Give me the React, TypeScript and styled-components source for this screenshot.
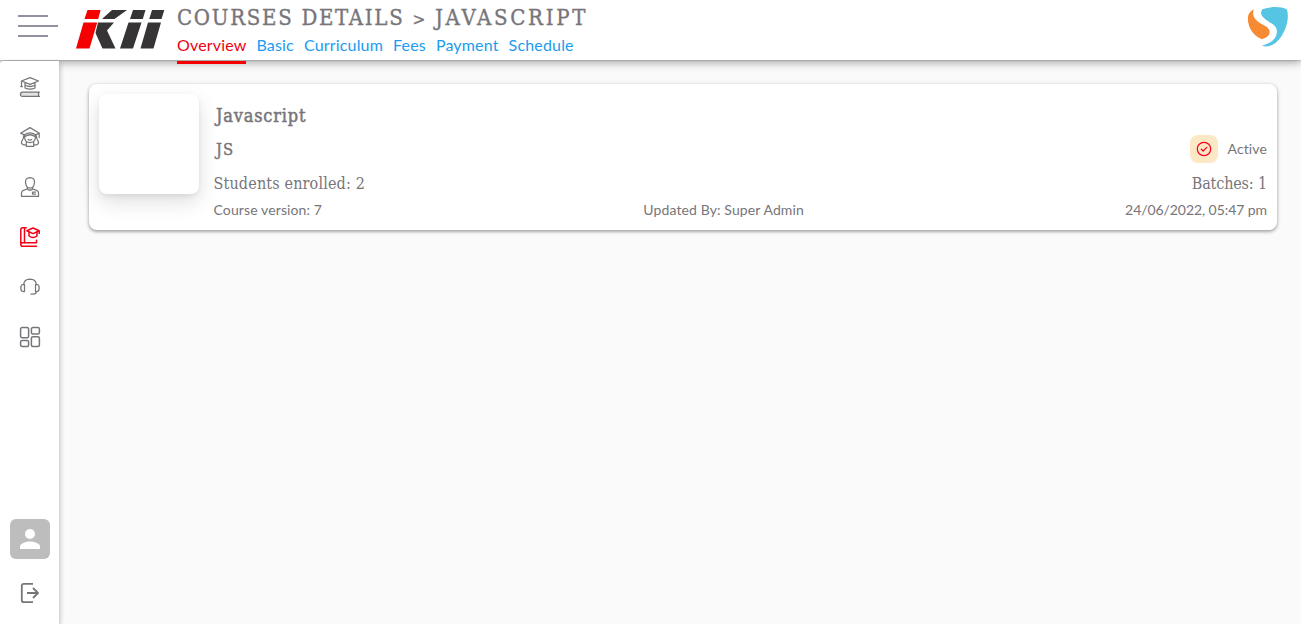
import React from "react";
import styled, { createGlobalStyle } from "styled-components";

const GlobalStyle = createGlobalStyle`
  * { box-sizing: border-box; }
  body { margin: 0; background: #fafafa; font-family: Lato, "Liberation Sans", sans-serif; color: #77757a; overflow: hidden; }
`;

const slab = `"Roboto Slab", "DejaVu Serif Condensed", "DejaVu Serif", serif`;

const Page = styled.div`
  height: 100vh;
  display: flex;
  flex-direction: column;
`;

const Header = styled.header`
  height: 60px;
  flex: none;
  display: flex;
  background: #fff;
  box-shadow: 0 1px 1px rgba(0, 0, 0, 0.1), 0 2px 9px rgba(0, 0, 0, 0.38);
  position: relative;
`;

const MenuButton = styled.div`
  width: 40px;
  height: 23px;
  margin: 15px 0 0 18px;
  display: flex;
  flex-direction: column;
  gap: 8px;
`;

const MenuLine = styled.span<{ $wide?: boolean }>`
  height: 2px;
  width: ${(p) => (p.$wide ? 40 : 30)}px;
  background: #9092a0;
`;

const LogoSvg = styled.svg`
  margin: 9px 0 0 18px;
  flex: none;
`;

const Heading = styled.div`
  margin-left: 12px;
  flex: 1;
`;

const Title = styled.h1`
  margin: 0;
  padding-top: 1px;
  height: 34px;
  font: 500 22px/34px ${slab};
  letter-spacing: 1.7px;
  white-space: nowrap;
  color: #77757a;
  -webkit-text-stroke: 0.35px #77757a;
`;

const Separator = styled.span`
  font-size: 17px;
`;

const CourseName = styled.span`
  letter-spacing: 2.7px;
`;

const Tabs = styled.nav`
  display: flex;
  gap: 10px;
  height: 30px;
`;

const Tab = styled.a<{ $active?: boolean }>`
  font-size: 16px;
  line-height: 22px;
  padding-bottom: 2px;
  letter-spacing: 0.17px;
  white-space: nowrap;
  color: ${(p) => (p.$active ? "#f00014" : "#219bf0")};
  border-bottom: 3px solid ${(p) => (p.$active ? "#f40000" : "transparent")};
  position: relative;
  z-index: 4;
`;

const BrandSvg = styled.svg`
  margin: 6px 12px 0 0;
  flex: none;
`;

const Body = styled.div`
  flex: 1;
  display: flex;
  min-height: 0;
`;

const Sidebar = styled.aside`
  width: 59px;
  margin: 1px 1px 0 0;
  padding: 16px 9px 21px 10px;
  background: #fff;
  border-radius: 4px 0 0 0;
  box-shadow: 1px 2px 5px rgba(0, 0, 0, 0.24);
  display: flex;
  flex-direction: column;
  align-items: center;
  gap: 30px;
  position: relative;
  z-index: 2;
`;

const NavIcon = styled.svg<{ $active?: boolean }>`
  width: 20px;
  height: 20px;
  flex: none;
  fill: none;
  stroke: ${(p) => (p.$active ? "#f00014" : "#77757a")};
  stroke-width: ${(p) => (p.$active ? 1.5 : 1.25)};
  stroke-linecap: round;
  stroke-linejoin: round;
  overflow: visible;
`;

const Account = styled.div`
  margin-top: auto;
  display: flex;
  flex-direction: column;
  align-items: center;
  gap: 24px;
`;

const Avatar = styled.div`
  width: 40px;
  height: 40px;
  border-radius: 6px;
  background: #bdbdbd;
  display: grid;
  place-items: center;
`;

const Main = styled.main`
  flex: 1;
  padding: 24px 24px 0 29px;
`;

const Card = styled.section`
  height: 146px;
  padding: 10px;
  display: flex;
  background: #fff;
  border-radius: 8px;
  box-shadow: 0 1px 4px rgba(0, 0, 0, 0.25), 0 2px 3px rgba(0, 0, 0, 0.18);
`;

const Thumbnail = styled.div`
  width: 100px;
  height: 100px;
  flex: none;
  border-radius: 8px;
  background: #fff;
  box-shadow: 0 8px 20px rgba(0, 0, 0, 0.13), 0 2px 5px rgba(0, 0, 0, 0.07);
`;

const Details = styled.div`
  flex: 1;
  margin-left: 14.5px;
`;

const Row = styled.div<{ $height: number; $indent?: boolean }>`
  height: ${(p) => p.$height}px;
  display: flex;
  align-items: center;
  justify-content: space-between;
  padding-left: ${(p) => (p.$indent ? 2.5 : 0)}px;
`;

const SlabText = styled.span<{ $size: number; $spacing: number; $stroke?: number }>`
  padding-top: 2px;
  font: 400 ${(p) => p.$size}px/24px ${slab};
  letter-spacing: ${(p) => p.$spacing}px;
  -webkit-text-stroke: ${(p) => p.$stroke ?? 0}px #77757a;
  white-space: nowrap;
`;

const Small = styled.span<{ $spacing?: number }>`
  font-size: 14px;
  line-height: 20px;
  letter-spacing: ${(p) => p.$spacing ?? 0.12}px;
  white-space: nowrap;
`;

const Status = styled.div`
  display: flex;
  align-items: center;
  gap: 9.4px;
`;

const StatusBadge = styled.span`
  width: 28px;
  height: 28px;
  border-radius: 8px;
  background: #fde8c5;
  display: grid;
  place-items: center;
`;

const tabs = ["Overview", "Basic", "Curriculum", "Fees", "Payment", "Schedule"];

const KitLogo = () => (
  <LogoSvg width="89" height="41" viewBox="76 9 89 41">
    <path fill="#f40000" d="M87.5 10H100.6L98.2 19H84.5ZM83.5 22.5H97.2L89.5 48.5H76Z" />
    <path fill="#373435" d="M112 10H127L114.5 19H102ZM133 10H145.5L142.8 19H130ZM152 10H164.3L161.5 19H149.2ZM98 22.5H114L107 30.5L115.5 48.5H102.5L95.5 33ZM128.5 22.5H141.5L133 48.5H120ZM148 22.5H161L153.5 48.5H140.5Z" />
  </LogoSvg>
);

const BrandLogo = () => (
  <BrandSvg width="42" height="42" viewBox="1247 6 42 42">
    <path fill="#f68b33" d="M1254 9.3C1248.5 12 1247.3 16 1248.2 22C1249.5 31 1255 36 1261.8 39.3C1267.5 37.5 1270.8 34.2 1269.3 30.2C1268 26.5 1263 25.3 1258.5 22C1253.8 18.5 1251.8 14 1254 9.3Z" />
    <path fill="#56c5e3" d="M1262.3 9.2C1271 6.5 1280 6.2 1287 9.4C1289.3 18 1286.8 28.7 1280.8 37.2C1276.5 43.2 1269.5 48.7 1262 45.4C1269.3 44.2 1275.8 39.5 1276.8 33.2C1277.8 27.2 1273.3 24.4 1268.5 21.4C1263 18 1258.8 14.3 1262.3 9.2Z" />
  </BrandSvg>
);

export default function App() {
  return (
    <Page>
      <GlobalStyle />
      <Header>
        <MenuButton>
          <MenuLine />
          <MenuLine $wide />
          <MenuLine />
        </MenuButton>
        <KitLogo />
        <Heading>
          <Title>
            COURSES DETAILS <Separator>&gt;</Separator> <CourseName>JAVASCRIPT</CourseName>
          </Title>
          <Tabs>
            {tabs.map((t, i) => (
              <Tab key={t} $active={i === 0}>{t}</Tab>
            ))}
          </Tabs>
        </Heading>
        <BrandLogo />
      </Header>
      <Body>
        <Sidebar>
          <NavIcon viewBox="0 0 20 20">
            <path d="M1.5 4L10 .6L18.5 4L10 7.3ZM5 5.6V11Q10 13.3 15 11V5.6M5 8.3Q10 10.7 15 8.3M1.5 4V9.5M.7 9.5H2.4" />
            <path fill="#e3e3e3" d="M19.5 15H2.5Q.5 15 .5 17.2T2.5 19.4H19.5M18.5 15V19.4" />
          </NavIcon>
          <NavIcon viewBox="0 0 20 20">
            <path d="M.6 6.2L10 .6L19.4 6.2L15.5 7.8Q10 4 4.5 7.8ZM19.2 6.2V10.5M4.7 7.8V11.5Q5.5 15.5 10 15.5T15.3 11.5V7.8M5 9.5Q10 6 15 9.5M3.8 8.5Q3.5 12 1.8 14.2Q.7 16.7 3.2 17.8H6M16.2 8.5Q16.5 12 18.2 14.2Q19.3 16.7 16.8 17.8H14M6.3 15V19.3H13.7V15M8.3 12.5Q10 13.8 11.7 12.5" />
          </NavIcon>
          <NavIcon viewBox="0 0 20 20">
            <path d="M10 .6Q14.8.8 14.5 5.5Q14 10.8 10 11.1Q6 10.8 5.5 5.5Q5.2.8 10 .6ZM7.3 10V12L3.5 13.3Q1.5 14 1.5 16V19.4H18.5V16Q18.5 14 16.5 13.3L12.7 12V10M7.3 12Q10 14.5 12.7 12M15.5 15H12.5V17H15.5" />
          </NavIcon>
          <NavIcon viewBox="0 0 20 20" $active>
            <path d="M4.5 16V.7H2.8Q.8.7.8 2.7V17.2Q.8 19.3 2.8 19.3H16.5M16.5 13.3V15.7H3Q.8 15.7.8 17.5M4.5.7H6.2M6.8 3.8L13 1L19.2 3.8L13 6.6ZM9 5V9Q13 11.8 17 9V5M19.2 3.8V6.5" />
          </NavIcon>
          <NavIcon viewBox="0 0 20 20">
            <path d="M3.7 7.5Q4 2.3 10 2.1Q16 2.3 16.3 7.5M4.5 7.5V14.5H3Q.8 14.3.8 11T3 7.5ZM15.5 7.5V14.5H17Q19.2 14.3 19.2 11T17 7.5ZM16.5 14.5Q16.3 17.2 13 17.2H11" />
          </NavIcon>
          <NavIcon viewBox="0 0 20 20">
            <g strokeWidth="1.5">
              <rect x=".6" y=".6" width="8" height="10.1" rx="1.5" />
              <rect x="11.4" y=".6" width="8" height="6.5" rx="1.5" />
              <rect x=".6" y="13.5" width="8" height="5.9" rx="1.5" />
              <rect x="11.4" y="9.7" width="8" height="9.7" rx="1.5" />
            </g>
          </NavIcon>
          <Account>
            <Avatar>
              <svg width="20" height="20" viewBox="0 0 20 20" fill="#fff">
                <circle cx="10" cy="5" r="5" />
                <path d="M0 20V17.5C0 14.2 6.7 12.5 10 12.5S20 14.2 20 17.5V20Z" />
              </svg>
            </Avatar>
            <NavIcon viewBox="0 0 20 20">
              <path strokeWidth="1.8" strokeLinecap="butt" d="M13 .8H3.8Q1.8.8 1.8 2.8V17.2Q1.8 19.2 3.8 19.2H13M7 10H18M13 5L18 10L13 15" />
            </NavIcon>
          </Account>
        </Sidebar>
        <Main>
          <Card>
            <Thumbnail />
            <Details>
              <Row $height={42} $indent>
                <SlabText $size={18} $spacing={0.82} $stroke={0.5}>Javascript</SlabText>
              </Row>
              <Row $height={26} $indent>
                <SlabText $size={16.5} $spacing={1} $stroke={0.4}>JS</SlabText>
                <Status>
                  <StatusBadge>
                    <svg width="16" height="16" viewBox="0 0 16 16" fill="none" stroke="#f5001d" strokeWidth="1.2" strokeLinecap="round" strokeLinejoin="round">
                      <circle cx="8" cy="8" r="6.7" />
                      <path d="M5.3 8.2L7.2 10L10.8 6.3" />
                    </svg>
                  </StatusBadge>
                  <Small>Active</Small>
                </Status>
              </Row>
              <Row $height={42}>
                <SlabText $size={16} $spacing={0.15}>Students enrolled: 2</SlabText>
                <SlabText $size={16} $spacing={-0.15}>Batches: 1</SlabText>
              </Row>
              <Row $height={12}>
                <Small>Course version: 7</Small>
                <Small>Updated By: Super Admin</Small>
                <Small $spacing={-0.07}>24/06/2022, 05:47 pm</Small>
              </Row>
            </Details>
          </Card>
        </Main>
      </Body>
    </Page>
  );
}
